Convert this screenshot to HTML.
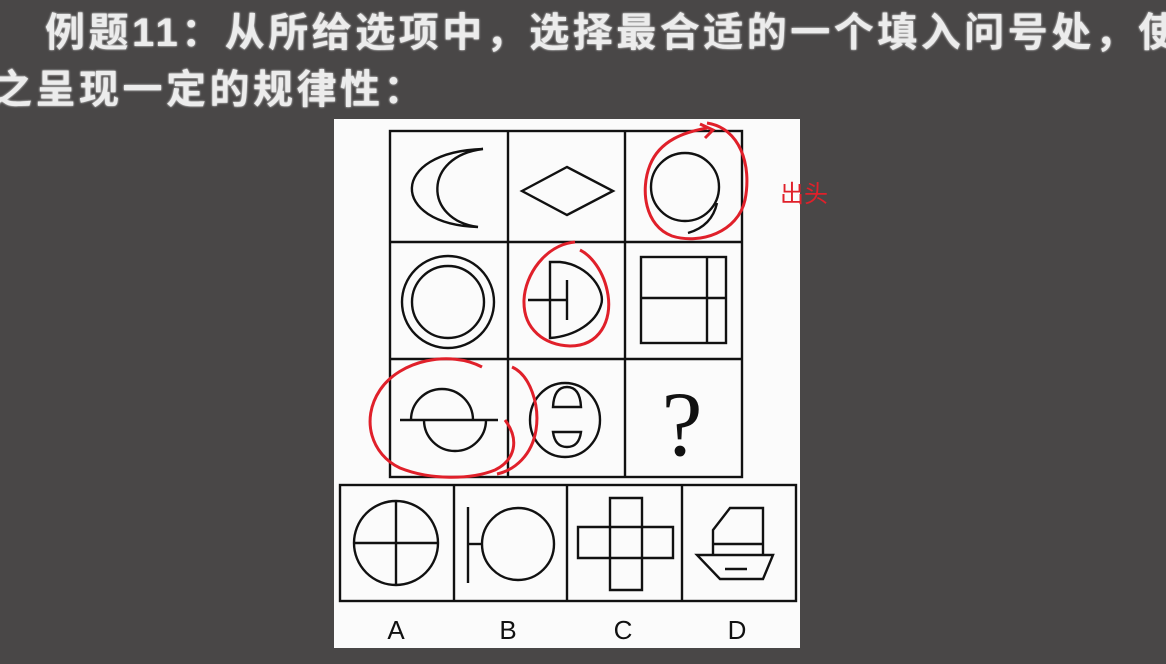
<!DOCTYPE html>
<html><head><meta charset="utf-8"><style>
html,body{margin:0;padding:0;}
body{width:1166px;height:664px;background:#494747;position:relative;overflow:hidden;font-family:"Liberation Sans","Noto Sans CJK SC",sans-serif;}
.t{position:absolute;color:#ececec;font-weight:bold;font-size:40px;letter-spacing:3.5px;white-space:nowrap;line-height:40px;text-shadow:0 0 2px #fff;}
svg{position:absolute;left:0;top:0;}
</style></head><body>
<div class="t" style="left:45px;top:13px;">例题11：从所给选项中，选择最合适的一个填入问号处，使</div>
<div class="t" style="left:-8px;top:70px;">之呈现一定的规律性：</div>
<svg width="1166" height="664" viewBox="0 0 1166 664">
<rect x="334" y="119" width="466" height="529" fill="#fbfbfb"/>
<g fill="none" stroke="#111" stroke-width="2.4">
<rect x="390" y="131" width="352" height="346"/>
<line x1="508" y1="131" x2="508" y2="477"/><line x1="625" y1="131" x2="625" y2="477"/>
<line x1="390" y1="242" x2="742" y2="242"/><line x1="390" y1="359" x2="742" y2="359"/>
<path d="M483,149 C389,152 389,224 478,227 C423,220 423,156 483,149 Z"/>
<path d="M522,191 L567,167 L613,191 L567,215 Z"/>
<circle cx="685" cy="187" r="34"/>
<path d="M717,203 Q712,226 688,233"/>
<circle cx="448" cy="302" r="46"/><circle cx="448" cy="302" r="36"/>
<path d="M550,262 L560,262 C590,265 606,292 601,305 C596,322 576,336 550,338 Z"/>
<line x1="528" y1="300" x2="567" y2="300"/><line x1="567" y1="280" x2="567" y2="320"/>
<rect x="641" y="257" width="85" height="86"/>
<line x1="641" y1="298" x2="726" y2="298"/><line x1="707" y1="257" x2="707" y2="343"/>
<path d="M411,420 A31,31 0 0 1 473,420"/>
<line x1="400" y1="420" x2="498" y2="420"/>
<path d="M424,420 A31,31 0 0 0 486,420"/>
<ellipse cx="565" cy="420" rx="35" ry="37"/>
<path d="M553,407 L581,407 Q580,387 567,387 Q554,387 553,407 Z"/>
<path d="M553,432 L581,432 Q579,447 567,447 Q555,447 553,432 Z"/>
<rect x="340" y="485" width="456" height="116"/>
<line x1="454" y1="485" x2="454" y2="601"/><line x1="567" y1="485" x2="567" y2="601"/><line x1="682" y1="485" x2="682" y2="601"/>
<circle cx="396" cy="543" r="42"/><line x1="354" y1="543" x2="438" y2="543"/><line x1="396" y1="501" x2="396" y2="585"/>
<line x1="468" y1="507" x2="468" y2="583"/><line x1="468" y1="544" x2="482" y2="544"/><circle cx="518" cy="544" r="36"/>
<path d="M610,498 H642 V527 H673 V558 H642 V590 H610 V558 H578 V527 H610 Z"/>
<line x1="610" y1="527" x2="642" y2="527"/><line x1="610" y1="558" x2="642" y2="558"/><line x1="610" y1="527" x2="610" y2="558"/><line x1="642" y1="527" x2="642" y2="558"/>
<path d="M713,555 V530 L730,508 H763 V555"/><line x1="713" y1="544" x2="763" y2="544"/>
<path d="M697,555 H773 L763,579 H720 Z"/><line x1="725" y1="569" x2="747" y2="569"/>
</g>
<g fill="none" stroke="#e0202a" stroke-width="3">
<path d="M707,123 C740,128 752,165 745,200 C738,232 700,245 672,236 C645,226 640,190 650,165 C660,140 685,132 707,128"/>
<path d="M700,124 L713,130 L705,138"/>
<path d="M575,242 C545,245 525,275 524,300 C523,330 545,345 570,346 C600,346 612,320 608,295 C604,270 590,255 580,250"/>
<path d="M482,367 C450,350 400,360 380,390 C360,420 372,455 400,468 C430,480 470,480 495,470 C515,460 520,440 505,420"/>
<path d="M512,367 C530,375 540,405 536,430 C532,455 515,470 497,474"/>
</g>
<text x="682" y="455" text-anchor="middle" font-family="Liberation Serif,serif" font-size="92" fill="#111">?</text>
<g font-family="Liberation Sans,sans-serif" font-size="26" fill="#111" text-anchor="middle">
<text x="396" y="639">A</text><text x="508" y="639">B</text><text x="623" y="639">C</text><text x="737" y="639">D</text>
</g>
<text x="780" y="202" font-family="Liberation Sans,Noto Sans CJK SC,sans-serif" font-size="24" fill="#e0202a">出头</text>
</svg>
</body></html>
